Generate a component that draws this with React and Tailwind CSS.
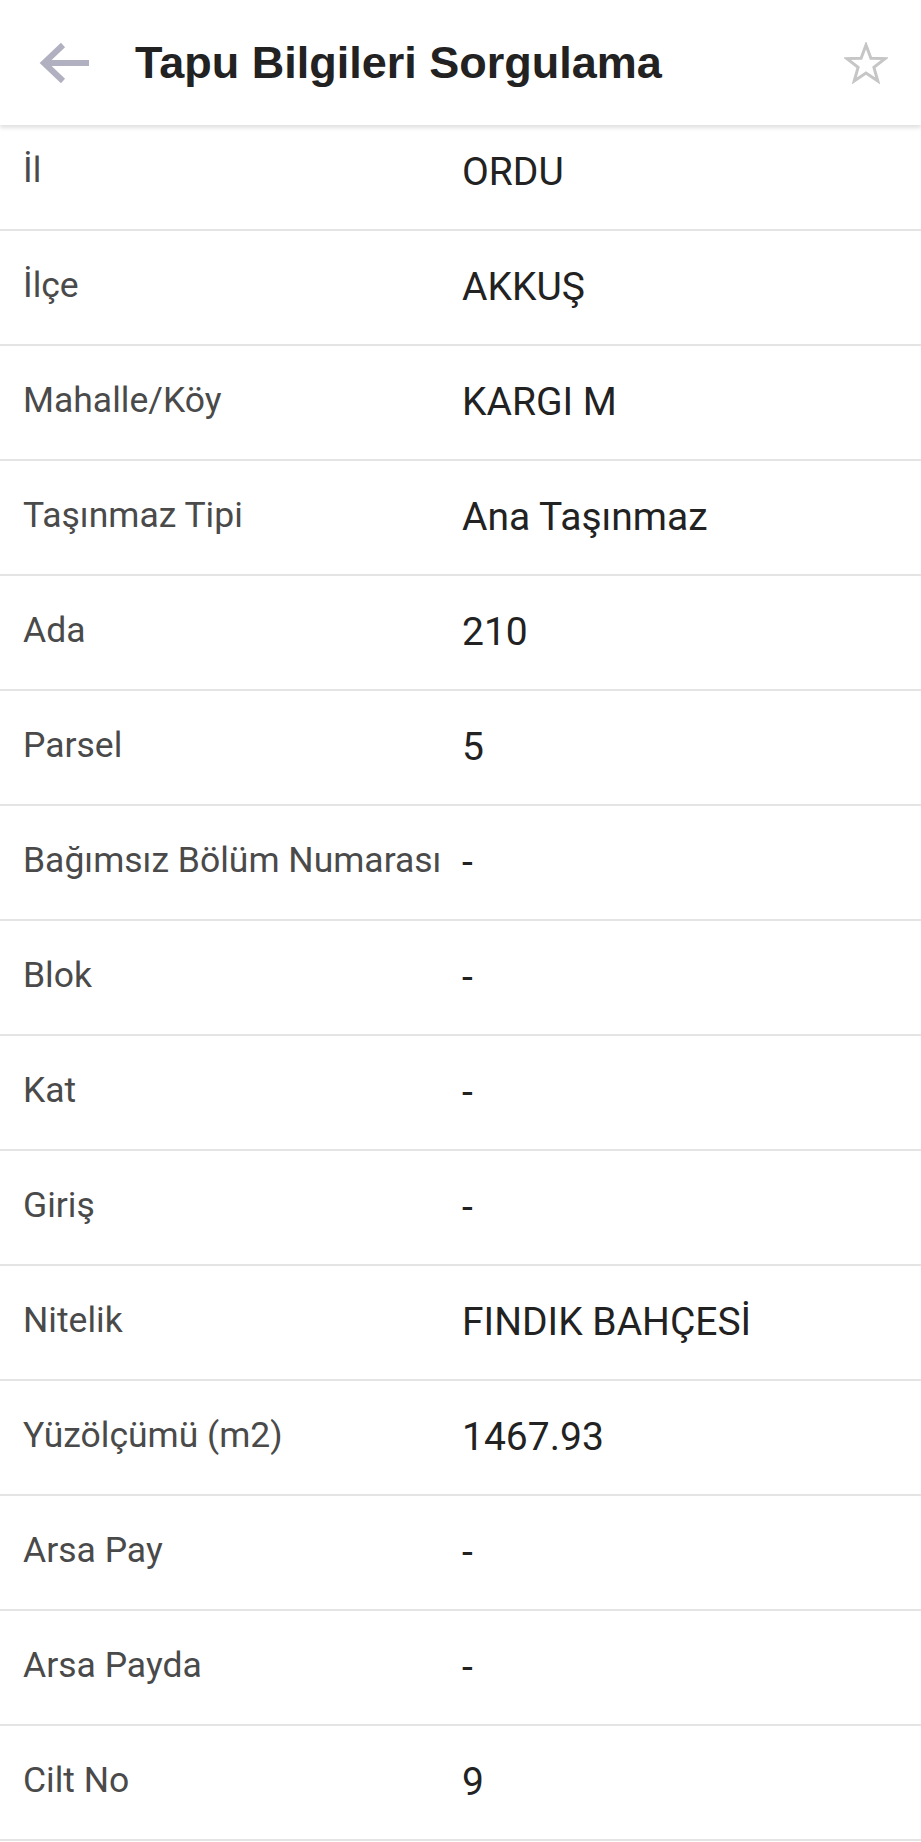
const rows = [
  ["İl", "ORDU"],
  ["İlçe", "AKKUŞ"],
  ["Mahalle/Köy", "KARGI M"],
  ["Taşınmaz Tipi", "Ana Taşınmaz"],
  ["Ada", "210"],
  ["Parsel", "5"],
  ["Bağımsız Bölüm Numarası", "-"],
  ["Blok", "-"],
  ["Kat", "-"],
  ["Giriş", "-"],
  ["Nitelik", "FINDIK BAHÇESİ"],
  ["Yüzölçümü (m2)", "1467.93"],
  ["Arsa Pay", "-"],
  ["Arsa Payda", "-"],
  ["Cilt No", "9"],
];

function BackArrow() {
  return (
    <svg width="50" height="42" viewBox="0 0 50 42" fill="none" stroke="#b1b0c1" strokeWidth="6">
      <path d="M5 21H50" />
      <path d="M24 3L5 21L24 39" />
    </svg>
  );
}

function StarOutline() {
  return (
    <svg width="44" height="42" viewBox="0 0 44 42" fill="none" stroke="#c6c6c6" strokeWidth="3" strokeLinejoin="miter">
      <path d="M22 3L26.9 16.2L41 16.6L29.9 25.3L33.8 39L22 31L10.2 39L14.1 25.3L3 16.6L17.1 16.2Z" />
    </svg>
  );
}

export default function App() {
  return (
    <div className="w-[921px] min-h-[1842px] bg-white font-['Roboto',sans-serif]">
      <header className="relative z-10 h-[125px] bg-white flex items-center shadow-[0_3px_4px_rgba(0,0,0,0.12)]">
        <div className="w-[135px] pl-[39px] flex items-center">
          <BackArrow />
        </div>
        <h1 className="flex-1 text-[45px] font-bold text-[#222] font-['Liberation_Sans',Arial,sans-serif]">
          Tapu Bilgileri Sorgulama
        </h1>
        <div className="pr-[33px] flex items-center">
          <StarOutline />
        </div>
      </header>
      <div className="-mt-[9px]">
        {rows.map(([label, value]) => (
          <div key={label} className="h-[115px] flex items-center border-b-2 border-[#e4e4e4]">
            <div className="w-[462px] pl-[23px] text-[35.5px] text-[#4a4a4a] -mt-[4px]">{label}</div>
            <div className="text-[39px] text-[#222]">{value}</div>
          </div>
        ))}
      </div>
    </div>
  );
}
